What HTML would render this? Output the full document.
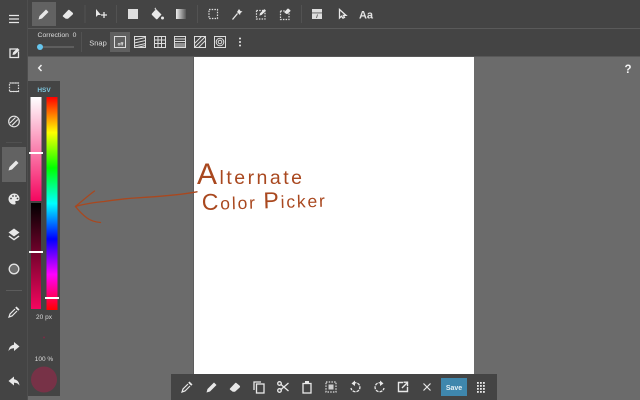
<!DOCTYPE html>
<html><head><meta charset="utf-8"><style>
html,body{margin:0;padding:0;width:640px;height:400px;overflow:hidden;background:#6b6b6b}
svg{display:block;filter:blur(.3px)}
text{font-family:"Liberation Sans",sans-serif}
.i{fill:none;stroke:#e8e8e8;stroke-width:1.300}
.f{fill:#e8e8e8;stroke:none}
.d{fill:none;stroke:#ddd;stroke-width:1.200;stroke-dasharray:1.500 1.200}
</style></head><body>
<svg width="640" height="400" viewBox="0 0 640 400" xmlns="http://www.w3.org/2000/svg">
<defs>
<linearGradient id="sat" x1="0" y1="0" x2="0" y2="1"><stop offset="0" stop-color="#fff"/><stop offset="1" stop-color="#f5065f"/></linearGradient>
<linearGradient id="val" x1="0" y1="0" x2="0" y2="1"><stop offset="0" stop-color="#000"/><stop offset="1" stop-color="#f5065f"/></linearGradient>
<linearGradient id="hue" x1="0" y1="0" x2="0" y2="1"><stop offset="0" stop-color="#f00"/><stop offset=".167" stop-color="#ff0"/><stop offset=".333" stop-color="#0f0"/><stop offset=".5" stop-color="#0ff"/><stop offset=".667" stop-color="#00f"/><stop offset=".833" stop-color="#f0f"/><stop offset="1" stop-color="#f00"/></linearGradient>
<linearGradient id="gr" x1="0" y1="0" x2="1" y2="0"><stop offset="0" stop-color="#eee"/><stop offset="1" stop-color="#555"/></linearGradient>
<path id="pen" d="M-5.500 5.500l1-3.500 6.500-6.500 2.500 2.500-6.500 6.500z"/>
<path id="era" d="M-5 1.500L0-3.800q.8-.8 1.700 0l3 2.600q.8.800 0 1.700L0 4.800h-2.200l-2.800-2.200q-.6-.6 0-1.100z"/>
<g id="dropper"><path d="M2.500-5.500l3 3-1.300 1.300-3-3z" fill="#e8e8e8"/><path d="M1-3L-4 2l-1 3 3-1 5-5" fill="none" stroke="#e8e8e8" stroke-width="1.200"/></g>
</defs>

<rect width="640" height="400" fill="#6b6b6b"/>
<rect x="194" y="57" width="280" height="317" fill="#fff"/>
<rect x="193" y="57" width="1" height="317" fill="#5c5c5c"/>

<!-- top bar -->
<rect width="640" height="56.500" fill="#444"/>
<rect x="28" y="28" width="612" height="1" fill="#5a5a5a"/>
<rect x="32" y="2" width="24" height="24" fill="#626262"/>
<rect x="110" y="32" width="20" height="20" fill="#606060"/>
<rect x="84.500" y="5" width="1" height="18" fill="#525252"/>
<rect x="116" y="5" width="1" height="18" fill="#525252"/>
<rect x="197" y="5" width="1" height="18" fill="#525252"/>
<rect x="301" y="5" width="1" height="18" fill="#525252"/>
<rect x="81" y="32" width="1" height="20" fill="#525252"/>

<!-- left bar -->
<rect width="27.500" height="400" fill="#444"/>
<rect x="27" y="0" width="1" height="400" fill="#4e4e4e"/>
<rect x="2" y="147" width="24" height="35" fill="#626262"/>
<rect x="6" y="142" width="16" height="1" fill="#505050"/>
<rect x="6" y="290" width="16" height="1" fill="#5c5c5c"/>

<!-- palette -->
<rect x="28" y="81" width="32" height="315" fill="#444"/>
<rect x="30.500" y="97" width="11" height="104" fill="url(#sat)"/>
<rect x="31" y="203" width="10" height="106" fill="url(#val)"/>
<rect x="46.500" y="97" width="11" height="213" fill="url(#hue)"/>
<rect x="29" y="152" width="14" height="2" fill="#fff"/>
<rect x="29" y="251" width="14" height="2" fill="#fff"/>
<rect x="45" y="297" width="14" height="2" fill="#fff"/>
<text x="44" y="92" font-size="6.500" font-weight="bold" fill="#7cc4dc" text-anchor="middle">HSV</text>
<text x="44" y="319" font-size="6.500" fill="#ddd" text-anchor="middle">20 px</text>
<text x="44" y="361" font-size="6.500" fill="#ddd" text-anchor="middle">100 %</text>
<circle cx="44" cy="337.500" r="1" fill="#7a2c46"/>
<circle cx="44" cy="379.500" r="13" fill="#773247"/>

<!-- top row icons -->
<g class="f" transform="translate(44,14)"><use href="#pen"/></g>
<g class="f" transform="translate(68,14)"><use href="#era"/></g>
<g transform="translate(100,14)">
<path class="f" d="M-4-5v8l2-2 3 0z"/>
<path class="i" d="M1 1h6M4-2v6"/>
</g>
<rect x="128" y="9" width="10" height="10" fill="#dedede"/>
<g transform="translate(157,14)"><path class="f" d="M-1-5l5.500 5.500-4 4.500q-.8.700-1.500 0l-4-4q-.7-.7 0-1.500zM-1-6.500l-1.500 1 1 2z"/><circle class="f" cx="5.500" cy="4" r="1.500"/></g>
<rect x="176" y="9" width="10" height="10" fill="url(#gr)"/>
<rect class="d" x="209" y="9.500" width="8.500" height="9"/>
<g transform="translate(236,14)"><path class="i" d="M-3.500 5.500L1.500-.5"/><path class="f" d="M1-2l2-3 1.500 2 2 .5-2 1.500-.5 2-1.500-1.500z"/></g>
<g transform="translate(261,14)"><rect class="d" x="-4.500" y="-3.500" width="8.500" height="8.500"/><g class="f" transform="translate(2,-2) scale(.65)"><use href="#pen"/></g></g>
<g transform="translate(285,14)"><rect class="d" x="-4.500" y="-3" width="8.500" height="8.500"/><g class="f" transform="translate(2.500,-3) scale(.6)"><use href="#era"/></g></g>
<g transform="translate(317,14)"><rect x="-5" y="-5" width="10" height="3.500" fill="#dedede"/><rect x="-5" y="-.5" width="10" height="5.500" fill="#dedede"/><rect x="-5" y="-1.800" width="10" height="1.400" fill="#8a8a8a"/><path d="M.5 .5L-.5 4" stroke="#555" stroke-width=".8"/></g>
<path class="i" d="M339.500 9.500v8.500l2-1.800 1.500 2 1.500-.8-1.200-2h2.700z"/>
<text x="366" y="18.500" font-size="11" font-weight="bold" fill="#e4e4e4" text-anchor="middle">Aa</text>

<!-- second row -->
<text x="57" y="37" font-size="6.800" fill="#ddd" text-anchor="middle">Correction&#160; 0</text>
<rect x="40" y="46.500" width="34" height="1" fill="#777"/>
<circle cx="40" cy="47" r="3" fill="#66c6ee"/>
<text x="98" y="45.500" font-size="7.500" fill="#ddd" text-anchor="middle">Snap</text>
<g transform="translate(120,42)">
<rect x="-5.500" y="-5.500" width="11" height="11" fill="none" stroke="#ddd" stroke-width="1"/>
<text x="0.500" y="3.500" font-size="4.500" font-weight="bold" fill="#eee" text-anchor="middle">off</text>
</g>
<g transform="translate(140,42)" fill="none" stroke="#ddd" stroke-width="1">
<rect x="-5.500" y="-5.500" width="11" height="11"/>
<path d="M-5.500-2L5.500-4.500M-5.500 1L5.500-1.500M-5.500 4L5.500 1.500M-3 5.500L5.500 3.500"/>
</g>
<g transform="translate(160,42)" fill="none" stroke="#ddd" stroke-width="1">
<rect x="-5.500" y="-5.500" width="11" height="11"/>
<path d="M-5.500-2h11M-5.500 1.500h11M-2-5.500v11M1.500-5.500v11"/>
</g>
<g transform="translate(180,42)" fill="none" stroke="#ddd" stroke-width="1">
<rect x="-5.500" y="-5.500" width="11" height="11"/>
<path d="M-5.500-3h11M-5.500-.5h11M-5.500 2h11M-5.500 4h11"/>
</g>
<g transform="translate(200,42)" fill="none" stroke="#ddd" stroke-width="1">
<rect x="-5.500" y="-5.500" width="11" height="11"/>
<path d="M-5.500 5.500L5.500-5.500M-5.500 1.500L1.500-5.500M-1.500 5.500L5.500-1.500"/>
</g>
<g transform="translate(220,42)" fill="none" stroke="#ddd" stroke-width="1">
<rect x="-5.500" y="-5.500" width="11" height="11"/>
<circle r="3.800"/><circle r="1.800"/>
</g>
<g class="f"><circle cx="240" cy="38.500" r="1"/><circle cx="240" cy="42" r="1"/><circle cx="240" cy="45.500" r="1"/></g>

<!-- left icons -->
<path d="M9 15.500h10M9 19h10M9 22.500h10" stroke="#e8e8e8" stroke-width="1.300" fill="none"/>
<g transform="translate(14,53)"><path class="i" d="M3-4h-7v8.500h8.500v-6"/><path class="f" d="M-1.500 2l.5-2.500 4.500-4.500 2 2-4.500 4.500z"/></g>
<g transform="translate(14,87)"><rect class="d" x="-4.500" y="-4" width="9" height="8.500"/><path stroke="#ddd" stroke-width="1" d="M-4.500-4h9M-4.500 4.500h9"/></g>
<g transform="translate(14,121.500)" fill="none" stroke="#e4e4e4" stroke-width="1.200"><circle r="5.300"/><path d="M-4 1.500L1.500-4M-2 3.800L3.800-2"/></g>
<g class="f" transform="translate(14,165)"><use href="#pen"/></g>
<g transform="translate(14,199)"><path class="f" d="M0-5.500c3.500 0 5.500 2.500 5.500 5 0 2-1.500 2.500-3 2.500-1.500 0-1.500 1-1 1.500.5 1 0 2-1.500 2-3 0-5.500-2.500-5.500-5.500s2.500-5.500 5.500-5.500z"/><g fill="#424242"><circle cx="-3" cy="-.5" r=".9"/><circle cx="-1" cy="-3" r=".9"/><circle cx="2" cy="-3" r=".9"/><circle cx="3.500" cy="-.5" r=".9"/></g></g>
<g transform="translate(14,234)"><path class="f" d="M0-5.500L5.500-1.500 0 2.500-5.500-1.500z"/><path class="f" d="M-4.500 1.500L0 4.800 4.500 1.500 5.500 2.500 0 6.500-5.500 2.500z"/></g>
<circle cx="14" cy="269" r="4.800" fill="#6d6d6d" stroke="#e4e4e4" stroke-width="1.300"/>
<g transform="translate(14,312)"><use href="#dropper"/></g>
<path class="f" d="M14 342l5.500 4.500-5.500 4.500v-2.800c-2.500 0-4.500 1-5.500 3 .3-3.500 2-6 5.500-6.500z"/>
<path class="f" d="M14 376.500l-5.500 4.500 5.500 4.500v-2.800c2.500 0 4.500 1 5.500 3-.3-3.500-2-6-5.500-6.500z"/>

<!-- chevron / help -->
<path d="M41.500 65l-2.800 3 2.800 3" fill="none" stroke="#f0f0f0" stroke-width="1.500"/>
<text x="628" y="73" font-size="11.500" font-weight="bold" fill="#f4f4f4" text-anchor="middle">?</text>

<!-- arrow -->
<g fill="none" stroke="#a9481f" stroke-width="1.300" stroke-linecap="round">
<path d="M75.500 206.500C85 203.500 95 202.500 104 201.500C118 199.500 125 198.500 135 198C160 196.500 180 195 197 191.800"/>
<path d="M75.500 206.500C82 201 89 195 94.500 191"/>
<path d="M75.500 206.500C79 211 83 215 87 218C91 221 95 222 100.500 222.500"/>
</g>
<!-- handwriting as live text -->
<text x="197" y="184" fill="#a9481f" font-size="19.500" textLength="105" lengthAdjust="spacing"><tspan font-size="30">A</tspan>lternate</text>
<text x="202" y="210" fill="#a9481f" font-size="17.500" textLength="123" lengthAdjust="spacing" transform="rotate(-1.500 202 210)"><tspan font-size="23">C</tspan>olor <tspan font-size="23">P</tspan>icker</text>

<!-- bottom bar -->
<rect x="171" y="374" width="326" height="26" fill="#444"/>
<g transform="translate(187,387)"><use href="#dropper"/></g>
<g class="f" transform="translate(212,387)"><use href="#pen"/></g>
<g class="f" transform="translate(235,387)"><use href="#era"/></g>
<g transform="translate(259,387)" fill="none" stroke="#e8e8e8" stroke-width="1.300"><path d="M-5 3v-8h7"/><rect x="-2.500" y="-3" width="7.500" height="9"/></g>
<g transform="translate(283,387)" fill="none" stroke="#e8e8e8" stroke-width="1.300"><circle cx="-3.500" cy="-3.500" r="1.800"/><circle cx="-3.500" cy="3.500" r="1.800"/><path d="M-2 -2.500L5.500 4M-2 2.500L5.500-4"/></g>
<g transform="translate(307,387)" fill="none" stroke="#e8e8e8" stroke-width="1.300"><rect x="-4" y="-3.500" width="8" height="9.500"/><rect class="f" x="-2" y="-6" width="4" height="3"/></g>
<g transform="translate(331,387)"><rect class="d" x="-5" y="-5" width="10" height="10"/><rect x="-2.500" y="-2.500" width="5" height="5" fill="#ccc"/></g>
<g transform="translate(355,387)" fill="none" stroke="#e8e8e8" stroke-width="1.300"><path d="M-1.500-3.800A4.500 4.500 0 1 1-4 1" stroke-dasharray="3 1"/><path class="f" d="M0-6.500v5.500l-3.500-2.500z"/></g>
<g transform="translate(380,387)" fill="none" stroke="#e8e8e8" stroke-width="1.300"><path d="M1.500-3.800A4.500 4.500 0 1 0 4 1" stroke-dasharray="3 1"/><path class="f" d="M0-6.500v5.500l3.500-2.500z"/></g>
<g transform="translate(403,387)" fill="none" stroke="#e8e8e8" stroke-width="1.400"><path d="M0-4.500h-4.500v9h9V0"/><path d="M-1 1L4-4M.5-4.800h4v4"/></g>
<path d="M423.500 383.500l7 7M430.500 383.500l-7 7" stroke="#e8e8e8" stroke-width="1.200"/>
<rect x="441" y="378" width="26" height="18" fill="#3f87ad"/>
<text x="454" y="390" font-size="7" font-weight="bold" fill="#e6f0f5" text-anchor="middle">Save</text>
<g class="f"><rect x="477" y="382" width="1.800" height="1.800"/><rect x="480" y="382" width="1.800" height="1.800"/><rect x="483" y="382" width="1.800" height="1.800"/><rect x="477" y="385" width="1.800" height="1.800"/><rect x="480" y="385" width="1.800" height="1.800"/><rect x="483" y="385" width="1.800" height="1.800"/><rect x="477" y="388" width="1.800" height="1.800"/><rect x="480" y="388" width="1.800" height="1.800"/><rect x="483" y="388" width="1.800" height="1.800"/><rect x="477" y="391" width="1.800" height="1.800"/><rect x="480" y="391" width="1.800" height="1.800"/><rect x="483" y="391" width="1.800" height="1.800"/></g>
</svg>
</body></html>
